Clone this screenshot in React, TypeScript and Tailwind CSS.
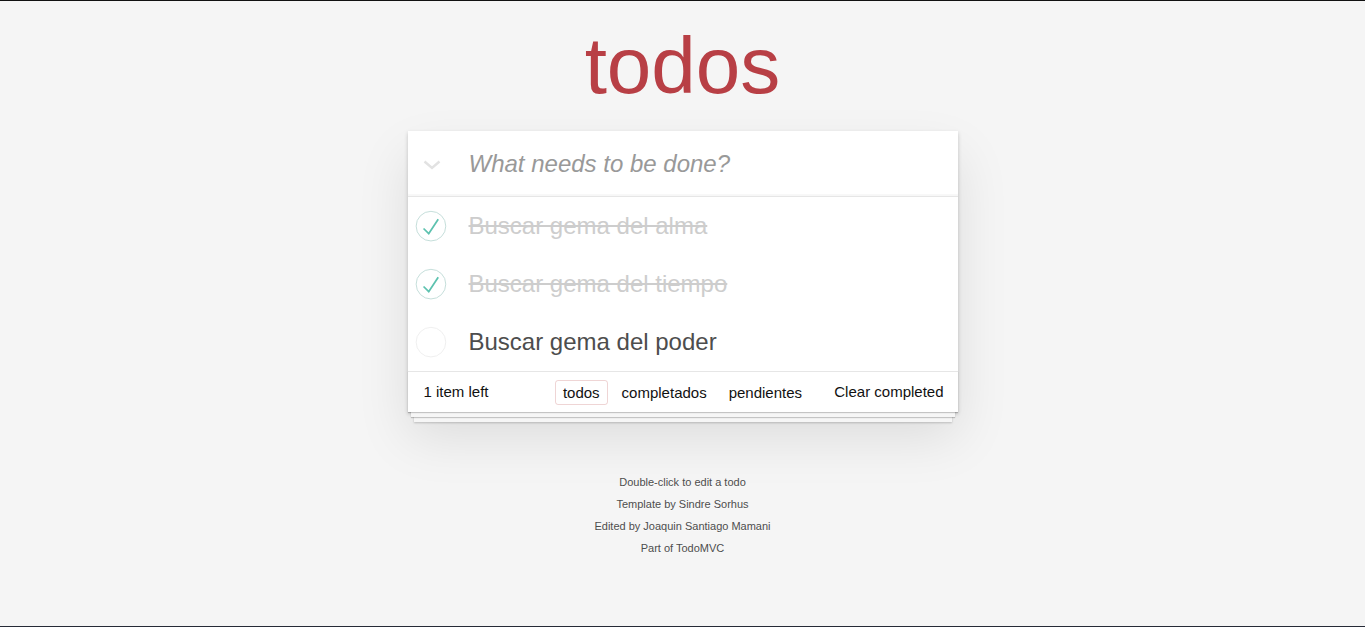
import React from "react";

type Todo = { id: number; title: string; completed: boolean };

const todos: Todo[] = [
  { id: 1, title: "Buscar gema del alma", completed: true },
  { id: 2, title: "Buscar gema del tiempo", completed: true },
  { id: 3, title: "Buscar gema del poder", completed: false }
];

const filters = ["todos", "completados", "pendientes"];

function Toggle({ done }: { done: boolean }) {
  return (
    <svg width="40" height="40" viewBox="-10 -18 100 135" className="shrink-0">
      <circle cx="50" cy="50" r="50" fill="none" stroke={done ? "#bddad5" : "#ededed"} strokeWidth="3" />
      {done && <path fill="#5dc2af" d="M72 25L42 71 27 56l-4 4 20 20 34-52z" />}
    </svg>
  );
}

export default function App() {
  const left = todos.filter((t) => !t.completed).length;

  return (
    <div className="h-[627px] flex flex-col items-center bg-[#f5f5f5] border-t border-b border-t-[#111] border-b-[#262a36] font-['Liberation_Sans',Helvetica,Arial,sans-serif] text-[14px]">
      <h1 className="pt-[25px] text-[80px] leading-[80px] font-extralight text-[#b83f45] text-center">
        todos
      </h1>

      <section className="mt-[25px] w-[550px] bg-white shadow-[0_2px_4px_0_rgba(0,0,0,0.2),0_25px_50px_0_rgba(0,0,0,0.1)]">
        <header className="h-[65px] flex items-center shadow-[inset_0_-2px_1px_rgba(0,0,0,0.03)]">
          <div className="w-[61px] shrink-0 pl-[15px] pt-[2px]">
            <svg width="18" height="10" viewBox="0 0 18 10">
              <polyline points="1.5,1.5 9,8 16.5,1.5" fill="none" stroke="#e2e2e2" strokeWidth="2.4" />
            </svg>
          </div>
          <input
            className="flex-1 h-full pr-4 text-[24px] text-[#4d4d4d] outline-none bg-transparent placeholder:italic placeholder:text-[#999]"
            placeholder="What needs to be done?"
          />
        </header>

        <ul className="border-t border-[#e6e6e6]">
          {todos.map((todo) => (
            <li key={todo.id} className="h-[58px] flex items-center">
              <Toggle done={todo.completed} />
              <span
                className={`ml-[21px] pb-[2px] text-[24px] leading-[29px] ${
                  todo.completed ? "line-through text-[#cdcdcd]" : "text-[#4d4d4d]"
                }`}
              >
                {todo.title}
              </span>
            </li>
          ))}
        </ul>

        <footer className="h-[41px] px-[15px] grid grid-cols-[1fr_auto_1fr] items-center border-t border-[#e6e6e6] text-[15px] text-[#111] shadow-[0_1px_1px_rgba(0,0,0,0.2),0_8px_0_-3px_#f6f6f6,0_9px_1px_-3px_rgba(0,0,0,0.2),0_16px_0_-6px_#f6f6f6,0_17px_2px_-6px_rgba(0,0,0,0.2)]">
          <span className="text-left ml-px">
            {left} item left
          </span>
          <ul className="flex">
            {filters.map((f, i) => (
              <li key={f}>
                <a
                  href="#"
                  className={`block mx-[3px] px-[7px] py-[3px] leading-[17px] rounded-[3px] border ${
                    i === 0 ? "border-[rgba(175,47,47,0.2)]" : "border-transparent"
                  }`}
                >
                  {f}
                </a>
              </li>
            ))}
          </ul>
          <button className="justify-self-end -mr-px leading-[19px] pb-px">Clear completed</button>
        </footer>
      </section>

      <footer className="mt-[65px] flex flex-col gap-[11px] text-[11px] leading-[11px] text-[#4d4d4d] text-center [text-shadow:0_1px_0_rgba(255,255,255,0.5)]">
        <p>Double-click to edit a todo</p>
        <p>
          Template by <a href="#">Sindre Sorhus</a>
        </p>
        <p>Edited by Joaquin Santiago Mamani</p>
        <p>
          Part of <a href="#">TodoMVC</a>
        </p>
      </footer>
    </div>
  );
}
